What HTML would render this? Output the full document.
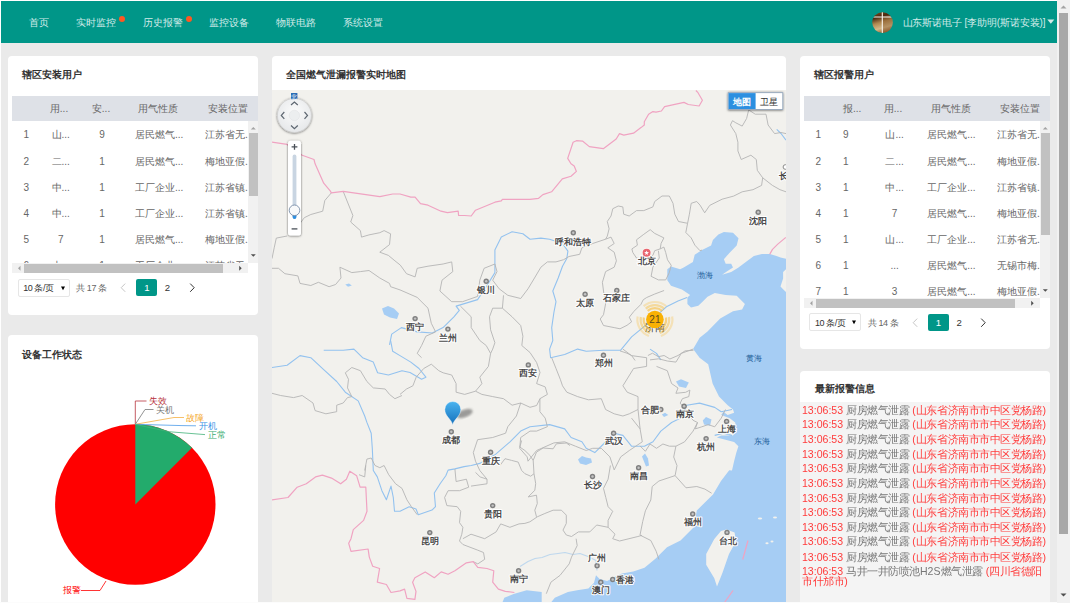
<!DOCTYPE html><html><head><meta charset="utf-8"><style>
*{margin:0;padding:0;box-sizing:border-box}
html,body{width:1070px;height:603px;overflow:hidden;background:#fff;font-family:"Liberation Sans",sans-serif}
#bg{position:absolute;left:1px;top:1px;width:1056px;height:601px;background:#eaeaea}
#hdr{position:absolute;left:1px;top:1px;width:1056px;height:42px;background:#009688}
.nav{position:absolute;top:16px;font-size:10px;line-height:12px;color:#d2ebe8;white-space:nowrap}
.dot{position:absolute;top:16px;width:6px;height:6px;border-radius:3px;background:#ff5722}
.panel{position:absolute;background:#fff;border-radius:4px;overflow:hidden}
.ttl{position:absolute;font-size:10px;line-height:12px;font-weight:bold;color:#333;white-space:nowrap}
.th{position:absolute;background:#dee1e7}
.t{position:absolute;font-size:10px;line-height:12px;color:#666;white-space:nowrap}
.c{transform:translateX(-50%)}
.clip{position:absolute;overflow:hidden}
#scroll{position:absolute;left:1057px;top:0;width:13px;height:603px;background:#f1f1f1}
</style></head><body><div id="bg"></div><div id="hdr"></div>
<div class="nav" style="left:29px;top:16.5px;">首页</div>
<div class="nav" style="left:76px;top:16.5px;">实时监控</div>
<div class="nav" style="left:143px;top:16.5px;">历史报警</div>
<div class="nav" style="left:209px;top:16.5px;">监控设备</div>
<div class="nav" style="left:276px;top:16.5px;">物联电路</div>
<div class="nav" style="left:343px;top:16.5px;">系统设置</div>
<div class="dot" style="left:119px"></div><div class="dot" style="left:186px"></div>
<div class="panel" style="left:8px;top:56px;width:250px;height:259px"></div>
<div class="ttl" style="left:22px;top:69px;">辖区安装用户</div>
<div class="th" style="left:12px;top:96px;width:246px;height:25px"></div>
<div class="t c" style="left:59px;top:102.5px;">用...</div>
<div class="t c" style="left:101px;top:102.5px;">安...</div>
<div class="t c" style="left:158px;top:102.5px;">用气性质</div>
<div class="t c" style="left:228px;top:102.5px;">安装位置</div>
<div class="clip" style="left:12px;top:121px;width:236px;height:142px">
<div class="t" style="left:11.5px;top:8.400000000000006px;">1</div>
<div class="t c" style="left:48.7px;top:8.400000000000006px;">山...</div>
<div class="t c" style="left:90px;top:8.400000000000006px;">9</div>
<div class="t" style="left:123px;top:8.400000000000006px;">居民燃气...</div>
<div class="t" style="left:193px;top:8.400000000000006px;">江苏省无...</div>
<div class="t" style="left:11.5px;top:34.599999999999994px;">2</div>
<div class="t c" style="left:48.7px;top:34.599999999999994px;">二...</div>
<div class="t c" style="left:90px;top:34.599999999999994px;">1</div>
<div class="t" style="left:123px;top:34.599999999999994px;">居民燃气...</div>
<div class="t" style="left:193px;top:34.599999999999994px;">梅地亚假...</div>
<div class="t" style="left:11.5px;top:60.80000000000001px;">3</div>
<div class="t c" style="left:48.7px;top:60.80000000000001px;">中...</div>
<div class="t c" style="left:90px;top:60.80000000000001px;">1</div>
<div class="t" style="left:123px;top:60.80000000000001px;">工厂企业...</div>
<div class="t" style="left:193px;top:60.80000000000001px;">江苏省镇...</div>
<div class="t" style="left:11.5px;top:87.0px;">4</div>
<div class="t c" style="left:48.7px;top:87.0px;">中...</div>
<div class="t c" style="left:90px;top:87.0px;">1</div>
<div class="t" style="left:123px;top:87.0px;">工厂企业...</div>
<div class="t" style="left:193px;top:87.0px;">江苏省镇...</div>
<div class="t" style="left:11.5px;top:113.19999999999999px;">5</div>
<div class="t c" style="left:48.7px;top:113.19999999999999px;">7</div>
<div class="t c" style="left:90px;top:113.19999999999999px;">1</div>
<div class="t" style="left:123px;top:113.19999999999999px;">居民燃气...</div>
<div class="t" style="left:193px;top:113.19999999999999px;">梅地亚假...</div>
<div class="t" style="left:11.5px;top:139.39999999999998px;">6</div>
<div class="t c" style="left:48.7px;top:139.39999999999998px;">山...</div>
<div class="t c" style="left:90px;top:139.39999999999998px;">1</div>
<div class="t" style="left:123px;top:139.39999999999998px;">工厂企业...</div>
<div class="t" style="left:193px;top:139.39999999999998px;">江苏省无...</div>
</div>
<div style="position:absolute;left:248px;top:121px;width:10px;height:142px;background:#f1f1f1"></div>
<div style="position:absolute;left:248.7px;top:133px;width:9.3px;height:63px;background:#c1c1c1"></div>
<svg style="position:absolute;left:248px;top:121px" width="10" height="142"><path d="M2.8 8.5 L5.3 6 L7.8 8.5Z" fill="#a3a3a3"/><path d="M2.8 133.2 L5.3 135.7 L7.8 133.2Z" fill="#505050"/></svg>
<div style="position:absolute;left:12px;top:263px;width:236px;height:10px;background:#f1f1f1"></div>
<div style="position:absolute;left:24px;top:263.7px;width:199px;height:9.3px;background:#c1c1c1"></div>
<svg style="position:absolute;left:12px;top:263px" width="236" height="10"><path d="M8.5 2.8 L6 5.3 L8.5 7.8Z" fill="#a3a3a3"/><path d="M227.2 2.8 L229.7 5.3 L227.2 7.8Z" fill="#505050"/></svg>
<div style="position:absolute;left:17.6px;top:278.5px;width:52px;height:18px;border:1px solid #e6e6e6;border-radius:2px;background:#fff"></div>
<div class="t" style="left:23.200000000000003px;top:282.0px;color:#333;font-size:9px;letter-spacing:-0.4px">10 条/页</div>
<svg style="position:absolute;left:60.6px;top:285.5px" width="5" height="5"><path d="M0 0.5 L4 0.5 L2 4.2Z" fill="#000"/></svg>
<div class="t" style="left:76.1px;top:282.0px;font-size:9px;letter-spacing:-0.4px">共 17 条</div>
<svg style="position:absolute;left:120.1px;top:283.0px" width="7" height="10"><path d="M5.2 0.6 L1.2 4.7 L5.2 8.8" fill="none" stroke="#c6c6c6" stroke-width="1"/></svg>
<div style="position:absolute;left:136.1px;top:278.7px;width:21px;height:17.8px;border-radius:2px;background:#009688"></div>
<div class="t c" style="left:146.79999999999998px;top:281.8px;color:#fff;font-size:9.6px">1</div>
<div class="t c" style="left:167.4px;top:281.8px;color:#333;font-size:9.6px">2</div>
<svg style="position:absolute;left:188.6px;top:283.0px" width="7" height="10"><path d="M1.2 0.6 L5.2 4.7 L1.2 8.8" fill="none" stroke="#333" stroke-width="1"/></svg>
<div class="panel" style="left:272px;top:56px;width:514px;height:560px"></div>
<div class="ttl" style="left:286px;top:69px;">全国燃气泄漏报警实时地图</div>
<svg style="position:absolute;left:272px;top:89.5px" width="514" height="514" viewBox="272 89.5 514 514"><rect x="272" y="89.5" width="514" height="514" fill="#f2f1ed"/><polygon points="786.0,258.2 780.5,256.9 776.5,255.5 769.8,253.6 761.9,253.6 753.9,255.5 745.8,261.5 738.5,267.0 731.2,271.5 722.1,274.3 727.5,270.6 733.0,267.0 731.2,263.3 725.7,263.3 723.9,258.8 729.4,252.4 736.7,245.1 738.5,237.8 733.0,232.3 723.9,231.4 718.4,234.1 712.9,239.6 711.1,245.1 702.0,249.6 694.7,254.2 692.9,261.5 683.7,267.0 680.1,268.8 671.0,266.1 667.3,268.8 667.3,279.8 671.0,285.2 681.9,288.9 690.1,294.4 687.4,297.1 687.4,303.5 691.0,307.1 698.3,305.3 702.0,301.7 707.5,296.2 714.8,292.5 725.7,294.4 736.7,295.3 744.9,303.5 742.1,309.0 733.0,310.8 720.2,318.1 714.8,323.6 707.5,330.9 699.7,337.3 693.1,348.6 699.6,357.3 708.2,363.7 712.6,383.1 719.0,396.1 727.7,404.7 733.0,409.0 734.1,412.3 727.7,414.4 723.3,411.2 721.2,414.4 729.8,417.7 735.2,422.0 736.3,430.6 733.0,434.9 721.2,434.9 716.9,437.1 725.5,439.2 734.1,441.4 738.4,445.7 736.3,452.2 734.1,460.8 732.0,470.0 729.2,469.7 721.0,480.5 713.0,494.0 704.9,502.0 696.8,510.0 694.0,526.5 680.5,540.0 667.0,546.7 655.7,558.0 644.5,567.3 633.3,571.0 622.0,573.0 614.6,576.6 607.1,580.4 599.6,578.5 596.0,574.8 594.0,582.2 588.4,587.9 577.2,589.7 567.9,591.6 554.8,597.2 551.0,602.0 551.0,604.0 786.0,604.0 786.0,291.4 783.1,288.7 780.5,286.1 783.1,278.1 783.1,271.5 786.0,268.8" fill="#a6cdf4"/><polygon points="502.4,604.0 502.4,602.0 504.3,597.2 513.6,593.5 526.7,589.7 541.7,591.6 541.7,604.0" fill="#a6cdf4"/><polygon points="726.5,529.0 734.6,532.0 736.0,541.0 729.0,553.5 722.4,572.4 717.0,586.0 714.3,577.8 706.2,564.3 706.2,553.5 714.3,538.6 721.0,530.5" fill="#f2f1ed"/><ellipse cx="760" cy="518" rx="2.2" ry="1" fill="#f2f1ed"/><ellipse cx="775" cy="517" rx="2" ry="1" fill="#f2f1ed"/><ellipse cx="767" cy="542.7" rx="1.6" ry="1" fill="#f2f1ed"/><ellipse cx="772" cy="541" rx="1.5" ry="1" fill="#f2f1ed"/><polygon points="382.0,308.0 388.0,305.6 394.0,308.0 399.0,313.0 397.0,318.5 390.0,317.0 384.0,314.0" fill="#a6cdf4"/><polygon points="345.3,284.0 349.0,282.9 351.8,285.0 348.0,286.2" fill="#a6cdf4"/><polygon points="702.8,420.0 706.0,416.6 711.5,419.0 710.0,425.2 704.0,424.0" fill="#a6cdf4"/><polygon points="676.0,381.0 681.0,378.8 688.8,382.0 686.0,387.5 679.0,386.0" fill="#a6cdf4"/><polygon points="661.9,414.0 665.0,412.3 668.3,414.5 664.0,416.6" fill="#a6cdf4"/><polygon points="578.0,459.0 582.0,455.5 586.0,457.0 591.0,458.0 592.0,462.0 586.0,464.5 580.0,463.0" fill="#a6cdf4"/><polygon points="642.0,456.0 645.0,453.0 648.0,458.0 649.0,465.0 646.0,466.0 644.0,461.0" fill="#a6cdf4"/><polyline points="389.5,344.4 391.7,333.6 401.4,327.1 417.2,331.4 432.3,332.5 443.1,327.1 453.9,316.3 459.3,309.9 456.1,305.6 477.6,299.1 486.2,286.2 494.9,272.1 494.9,249.5 501.3,236.6 512.1,231.2 522.9,233.3 530.0,238.7 540.9,237.6 549.6,238.7 562.5,243.0 567.9,250.6 566.8,258.1 562.5,265.7 558.2,277.5 552.8,290.5 556.0,301.2 553.9,312.0 551.7,327.1 552.8,340.0 549.6,348.6 550.6,357.2 564.7,354.0 577.6,348.6 586.2,350.8 603.5,349.7 620.7,349.7 631.6,336.4 645.5,324.8 666.4,306.3 678.0,300.4 687.0,297.0" fill="none" stroke="#93c2ef" stroke-opacity="1" stroke-width="1.1" stroke-linejoin="round"/><polyline points="323.7,349.7 343.2,349.7 353.9,348.6 362.6,357.2 373.3,361.6 377.6,372.3 388.4,374.5 402.0,370.2 410.0,372.0 421.6,378.8 425.9,376.7 419.0,368.0 410.8,361.6 400.0,355.1 392.7,350.8 390.6,340.0" fill="none" stroke="#93c2ef" stroke-opacity="1" stroke-width="1.1" stroke-linejoin="round"/><polyline points="272.0,367.0 287.1,364.8 300.0,355.1 310.8,357.2 323.7,369.1 336.7,381.0 345.3,391.7 358.2,400.4 364.7,415.5 366.9,421.9 371.2,432.7 372.3,447.8 373.3,470.0 377.3,476.4 381.9,490.2 386.4,499.3 391.0,485.6 393.3,497.0 394.5,510.8 400.0,510.8 409.2,506.2 416.0,508.5 418.3,514.2 432.0,509.6 435.5,506.2 434.3,492.5 440.1,483.3 445.8,475.3 448.1,469.6 454.9,468.4 464.1,466.1 471.2,465.0 479.8,462.9 494.9,454.3 510.0,441.3 520.7,430.6 530.0,426.2 549.6,424.1 564.7,428.4 571.1,437.0 581.9,441.3 586.2,447.8 594.8,452.1 603.5,443.5 614.2,432.7 622.9,434.9 631.5,445.7 644.4,445.7 653.0,441.3 660.8,430.6 671.6,422.0 680.2,417.7 686.7,404.7 699.6,402.6 714.7,406.9 721.2,411.2 732.0,409.0" fill="none" stroke="#93c2ef" stroke-opacity="1" stroke-width="1.1" stroke-linejoin="round"/><polyline points="776.7,128.8 781.0,133.0 786.0,139.6" fill="none" stroke="#93c2ef" stroke-opacity="1" stroke-width="1.1" stroke-linejoin="round"/><polyline points="650.0,348.6 656.5,352.9 660.8,359.4" fill="none" stroke="#93c2ef" stroke-opacity="1" stroke-width="1.1" stroke-linejoin="round"/><polyline points="714.7,434.9 723.3,432.7 732.0,434.9" fill="none" stroke="#93c2ef" stroke-opacity="1" stroke-width="1.1" stroke-linejoin="round"/><polyline points="520.0,566.0 528.0,561.0 535.0,558.0 542.0,557.0 550.0,554.0 558.0,553.0 565.0,552.0 573.0,554.0 580.0,553.0 588.0,556.0 596.0,560.0 597.0,570.0" fill="none" stroke="#93c2ef" stroke-opacity="0.55" stroke-width="1.1" stroke-linejoin="round"/><polyline points="521.6,440.0 519.9,446.6 524.9,450.0 529.9,454.9 533.2,459.9 536.5,451.6 543.1,447.5 553.1,448.3 556.4,443.3 566.3,442.5 570.0,445.0" fill="none" stroke="#b4b4b4" stroke-width="0.9" stroke-linejoin="round"/><polyline points="533.2,459.9 534.0,473.2 535.7,483.1 534.8,489.8 528.2,496.4 536.5,494.7 537.3,503.0 534.8,509.7 536.5,516.3" fill="none" stroke="#b4b4b4" stroke-width="0.9" stroke-linejoin="round"/><polyline points="500.0,464.9 505.0,458.2 511.6,459.9 518.2,461.6 521.6,469.9 524.9,473.2 530.7,475.7 534.0,473.2" fill="none" stroke="#b4b4b4" stroke-width="0.9" stroke-linejoin="round"/><polyline points="287.1,235.5 276.3,237.6 274.2,247.3 272.0,258.1" fill="none" stroke="#b4b4b4" stroke-width="0.9" stroke-linejoin="round"/><polyline points="272.0,267.8 278.5,267.8 284.9,273.2 297.9,275.4 300.0,282.9 310.8,285.0 318.4,281.8 329.1,286.2 335.6,284.0 341.0,277.5 339.9,266.7 351.8,272.1 360.4,271.1 369.0,270.0 379.8,277.5 389.5,282.9 390.6,286.2 400.0,289.4 417.2,296.9 428.0,307.7 431.3,322.8 435.6,331.4 425.9,335.7 421.6,345.0 417.2,352.9 421.6,357.2" fill="none" stroke="#b4b4b4" stroke-width="0.9" stroke-linejoin="round"/><polyline points="331.3,192.4 324.8,200.0 322.7,210.7 310.8,214.0 304.3,217.2 300.0,223.0" fill="none" stroke="#b4b4b4" stroke-width="0.9" stroke-linejoin="round"/><polyline points="343.2,190.9 352.9,215.0 350.7,221.5 360.4,230.1 361.5,236.6 369.0,234.4 379.8,232.2 384.1,230.1 390.6,233.3 389.5,244.1 379.8,251.7 388.4,254.9 394.9,260.3 400.3,264.6 406.5,273.2 415.1,276.4 417.2,267.8 428.0,265.7 443.1,263.5 451.7,261.4 452.8,271.1 442.0,279.7 439.9,290.5 451.7,301.2 462.5,301.2 477.6,295.9 479.8,279.7 484.1,267.8 494.9,263.5 497.0,271.1 492.7,279.7 499.2,288.3 507.8,294.8 520.7,298.0 528.0,288.3 534.5,277.5 540.9,266.7 547.4,261.4 556.0,261.4 563.6,259.2 569.0,256.0 579.7,253.8 581.9,247.3 592.7,243.0 605.6,238.7 611.0,236.6 614.2,243.0 607.8,247.3 614.2,251.7 616.4,260.3 614.2,266.7 605.6,271.1 602.4,281.8 603.5,290.5 605.6,303.4 603.5,314.2 600.2,318.5 603.5,325.0 614.2,327.1 620.0,328.3 627.0,324.8 631.6,321.3 629.3,316.7 633.9,310.9 640.9,303.9 643.2,299.3 646.7,297.0 654.8,293.5 664.1,290.0" fill="none" stroke="#b4b4b4" stroke-width="0.9" stroke-linejoin="round"/><polyline points="605.6,238.7 607.3,235.6 609.1,228.3 607.3,221.0 611.0,215.5 612.8,208.2 618.2,205.5 622.8,206.4 623.7,213.7 629.2,215.5 636.5,210.1 643.8,210.1 652.9,206.4 654.7,201.0 662.0,195.5 669.3,195.5 673.0,202.8 674.8,213.7 678.5,221.0 687.6,222.8 689.4,213.7 691.2,202.8 696.7,201.0 700.0,204.6 704.7,212.3 709.7,204.9 722.1,198.7 733.6,195.6 742.2,191.3 753.0,189.2 761.6,184.9 762.7,177.3 757.3,169.8 756.3,159.0 750.9,154.7 741.2,159.0 737.9,150.4 737.9,141.7 735.8,133.1 730.4,124.5 732.5,120.2 735.8,122.3 742.2,125.6 746.6,118.0 748.7,109.4" fill="none" stroke="#b4b4b4" stroke-width="0.9" stroke-linejoin="round"/><polyline points="748.7,109.4 755.2,113.7 766.0,113.7 768.1,124.5 774.6,133.1 781.0,132.0 786.0,133.1" fill="none" stroke="#b4b4b4" stroke-width="0.9" stroke-linejoin="round"/><polyline points="762.7,177.3 772.4,184.9 780.0,189.2 786.0,191.3" fill="none" stroke="#b4b4b4" stroke-width="0.9" stroke-linejoin="round"/><polyline points="687.6,222.8 685.8,232.0 691.2,237.4 694.9,244.7 700.0,250.2 702.0,249.6" fill="none" stroke="#b4b4b4" stroke-width="0.9" stroke-linejoin="round"/><polyline points="636.5,239.3 643.8,233.8 650.2,229.2 654.7,232.9 663.9,237.4 661.1,242.9 660.2,248.4 654.7,250.2 652.9,254.8 649.3,257.5 642.0,259.3 636.5,257.5 632.8,252.0 631.9,248.4 637.4,244.7 636.5,239.3" fill="none" stroke="#b4b4b4" stroke-width="0.9" stroke-linejoin="round"/><polyline points="660.2,248.4 663.9,246.6 665.7,252.0 667.5,259.3 671.2,264.8 669.3,272.1 665.7,279.4 658.4,279.4 651.1,275.8 652.9,266.6 659.3,257.5 658.4,250.2" fill="none" stroke="#b4b4b4" stroke-width="0.9" stroke-linejoin="round"/><polyline points="620.0,350.4 627.0,352.7 631.6,355.0 635.1,360.0" fill="none" stroke="#b4b4b4" stroke-width="0.9" stroke-linejoin="round"/><polyline points="647.9,355.0 652.5,352.7 658.3,356.2 664.1,355.0 669.9,358.5 678.0,355.0 685.0,350.4 693.5,349.8" fill="none" stroke="#b4b4b4" stroke-width="0.9" stroke-linejoin="round"/><polyline points="622.9,348.6 631.5,355.1 646.6,357.2 646.6,365.9 633.6,368.0 622.9,385.3 627.2,391.7 638.0,396.1 638.0,409.0 629.3,413.3 622.9,415.5 614.2,413.3 605.6,409.0 601.3,398.2 588.4,399.3 577.6,396.1 566.8,391.7 562.5,385.3 560.3,378.8 556.0,368.0 551.7,357.2" fill="none" stroke="#b4b4b4" stroke-width="0.9" stroke-linejoin="round"/><polyline points="656.5,365.9 667.3,370.2 671.6,383.1 678.0,387.5 675.9,392.8 685.6,391.8 689.9,389.6 688.8,396.1 682.4,398.2 680.2,402.6 686.0,410.0 693.1,419.8 697.5,422.0 695.3,428.4 701.8,426.3 708.2,424.1 714.7,426.3 721.2,417.7 725.5,409.0" fill="none" stroke="#b4b4b4" stroke-width="0.9" stroke-linejoin="round"/><polyline points="650.0,359.4 658.6,358.3 667.3,360.5 675.9,361.6 681.3,352.9 693.1,348.6" fill="none" stroke="#b4b4b4" stroke-width="0.9" stroke-linejoin="round"/><polyline points="697.5,422.0 693.1,430.6 684.5,441.4 675.9,445.7 669.4,445.7 662.9,443.5 656.5,447.8 650.0,443.5 645.4,450.8 640.0,445.4" fill="none" stroke="#b4b4b4" stroke-width="0.9" stroke-linejoin="round"/><polyline points="675.9,445.7 673.7,456.5 677.0,465.1 675.1,475.1 686.0,487.3 696.8,486.0 704.9,488.6 711.6,492.7" fill="none" stroke="#b4b4b4" stroke-width="0.9" stroke-linejoin="round"/><polyline points="675.1,475.1 658.9,480.5 652.2,486.0 650.8,499.5 645.4,510.3 642.7,521.1 640.0,534.6 650.8,540.0 656.2,550.8 658.9,558.9" fill="none" stroke="#b4b4b4" stroke-width="0.9" stroke-linejoin="round"/><polyline points="638.0,409.0 640.1,428.4 642.3,441.3 629.3,450.0 620.7,456.4 614.2,469.4" fill="none" stroke="#b4b4b4" stroke-width="0.9" stroke-linejoin="round"/><polyline points="631.5,417.6 640.1,428.4" fill="none" stroke="#b4b4b4" stroke-width="0.9" stroke-linejoin="round"/><polyline points="536.6,383.1 545.2,386.4 547.4,393.9 539.9,398.2 539.9,411.2 545.2,417.6 547.4,426.2 536.6,430.6 530.0,430.6 520.7,437.0 519.7,447.8 527.2,456.4 528.0,460.7 536.6,450.0 553.9,442.4 564.7,441.3 575.4,445.7 586.2,450.0 592.7,447.8 601.3,447.8 609.9,456.4 614.2,469.4" fill="none" stroke="#b4b4b4" stroke-width="0.9" stroke-linejoin="round"/><polyline points="400.0,393.9 406.5,388.5 412.9,385.3 416.2,376.7 423.7,368.0 431.3,363.7 438.8,370.2 443.1,372.3 451.7,374.5 456.1,383.1 456.1,391.7 464.7,393.9 475.5,390.7 481.9,393.9 492.7,396.1 503.5,398.2 512.1,404.7 520.7,402.5 530.0,406.8 536.6,405.0 540.0,398.2" fill="none" stroke="#b4b4b4" stroke-width="0.9" stroke-linejoin="round"/><polyline points="475.5,390.7 481.9,383.1 479.8,376.7 488.4,365.9 490.6,352.9 492.7,348.6 494.9,342.2 490.6,329.3 489.5,316.3 492.7,307.7 502.4,307.7 512.1,316.3 520.7,325.0 522.9,335.7 521.8,345.0 530.0,352.0 536.6,362.0 540.0,372.0 536.6,383.1" fill="none" stroke="#b4b4b4" stroke-width="0.9" stroke-linejoin="round"/><polyline points="460.4,305.6 471.2,316.3 471.2,327.1 479.8,340.0 486.2,345.0 490.6,352.9" fill="none" stroke="#b4b4b4" stroke-width="0.9" stroke-linejoin="round"/><polyline points="503.5,294.8 502.4,307.7" fill="none" stroke="#b4b4b4" stroke-width="0.9" stroke-linejoin="round"/><polyline points="520.7,402.5 516.4,415.5 507.8,426.2 505.6,432.7 492.7,437.0 477.6,439.2 473.3,452.1 475.5,460.7 479.8,470.0 487.0,478.7 487.0,483.3 471.0,485.6" fill="none" stroke="#b4b4b4" stroke-width="0.9" stroke-linejoin="round"/><polyline points="272.0,392.8 280.6,395.0 293.6,397.1 302.2,395.0 313.0,402.5 315.1,410.1 325.9,413.3 336.7,411.2 336.7,404.7 343.2,402.5 347.5,397.1 351.8,396.1 347.5,387.4 348.5,378.8 345.3,372.3 351.8,367.0 360.4,370.2 366.9,381.0 373.3,387.4 385.2,388.5 389.5,393.9 394.9,398.2 402.0,395.0" fill="none" stroke="#b4b4b4" stroke-width="0.9" stroke-linejoin="round"/><polyline points="364.7,470.0 366.9,458.6 371.2,457.5 375.0,465.0 379.8,467.2 384.1,465.0 388.7,474.2 395.6,483.3 402.0,487.9 406.9,499.3 411.4,506.2 417.2,514.2" fill="none" stroke="#b4b4b4" stroke-width="0.9" stroke-linejoin="round"/><polyline points="365.8,465.0 364.7,476.4 359.0,474.2" fill="none" stroke="#b4b4b4" stroke-width="0.9" stroke-linejoin="round"/><polyline points="454.9,468.4 456.1,481.0 466.4,478.7 468.7,486.7 459.5,490.2 448.1,490.2 444.6,497.0 446.9,505.1 457.2,506.2 460.7,510.8 459.5,522.2 462.9,526.8 461.8,533.7 459.5,540.5 462.9,544.0 477.8,549.7 483.5,552.0 484.7,558.8 477.8,563.4 473.2,561.1" fill="none" stroke="#b4b4b4" stroke-width="0.9" stroke-linejoin="round"/><polyline points="462.9,538.2 471.0,533.7 484.7,538.2 496.1,531.4 500.7,523.4 509.9,526.8 519.0,523.4 524.9,522.9 529.9,521.3 537.3,516.3 544.8,513.0 553.1,509.7 561.4,509.7 566.3,514.6 566.3,522.9 563.0,529.6 566.3,534.5 571.5,536.0 578.4,531.4 589.8,531.4 596.7,524.5 608.1,526.8 615.0,533.7 612.7,538.2 619.6,540.5 637.9,536.0 642.0,534.8" fill="none" stroke="#b4b4b4" stroke-width="0.9" stroke-linejoin="round"/><polyline points="610.4,465.0 608.1,478.7 603.5,487.9 605.8,497.0 608.1,506.2 612.7,510.8 608.1,519.9 608.1,526.8" fill="none" stroke="#b4b4b4" stroke-width="0.9" stroke-linejoin="round"/><polyline points="576.1,538.2 577.2,545.1 571.5,556.6 569.2,563.4 560.0,574.9 550.9,581.7 546.3,593.2" fill="none" stroke="#b4b4b4" stroke-width="0.9" stroke-linejoin="round"/><polyline points="475.5,471.9 480.1,476.4 487.0,478.7" fill="none" stroke="#b4b4b4" stroke-width="0.9" stroke-linejoin="round"/><polyline points="272.0,141.7 287.1,143.9 302.2,154.7 314.0,159.0 315.1,163.3 323.7,182.7 330.2,190.3 331.3,192.4 343.2,190.9 379.8,196.1 392.7,193.5 400.0,193.5 410.8,196.7 415.1,196.7 420.5,203.2 428.0,204.7 441.0,210.7 447.4,212.2 458.2,210.7 458.6,215.0 464.7,215.0 471.2,215.5 475.5,209.7 494.9,201.7 501.3,200.4 502.4,198.9 530.0,198.9 538.6,197.8 542.9,194.1 551.6,191.3 562.3,178.4 571.0,175.8 576.4,170.9 574.2,165.5 571.0,163.3 567.7,157.9 573.1,141.7 576.4,140.2 582.8,140.7 589.3,146.1 603.3,148.2 616.2,138.5 619.5,133.1 623.8,134.6 633.5,132.7 641.0,127.1 644.3,124.5 644.3,121.3 648.6,113.7 652.9,111.1 656.0,111.6 661.4,110.5 664.6,106.2 684.0,101.9 688.3,104.0 699.1,105.5 702.4,99.7 698.0,92.2 695.9,90.0" fill="none" stroke="#f0a3c2" stroke-width="1.2" stroke-linejoin="round"/><polyline points="272.0,499.3 288.0,497.0 297.2,486.7 306.3,483.3 315.5,476.4 322.4,474.6 331.5,477.6 340.7,483.3 346.4,478.7 349.8,470.7 356.7,475.3 360.1,486.7 365.8,486.7 367.0,510.8 363.6,519.9 353.3,529.1 351.0,538.2 348.7,542.8 351.0,550.8 368.1,548.5 369.3,556.6 372.7,565.7 379.6,568.0 377.3,581.7 386.4,584.0 391.0,592.0 400.0,590.4 404.6,588.6 406.9,597.8 414.9,598.9 416.0,590.9 412.6,581.7 414.9,577.2 425.2,571.4 434.3,577.2 441.2,571.4 448.1,573.7 454.9,570.3 466.4,562.3 473.2,561.1 477.8,566.9 487.0,568.0 493.8,570.3 492.7,581.7 498.4,588.6 505.3,590.9 514.4,592.0" fill="none" stroke="#f0a3c2" stroke-width="1.2" stroke-linejoin="round"/><polyline points="769.8,253.6 772.5,248.9 777.8,243.6 785.8,237.0" fill="none" stroke="#f0a3c2" stroke-width="1.2" stroke-linejoin="round"/><polyline points="748.0,540.0 742.7,559.0" fill="none" stroke="#f0a3c2" stroke-width="1.2" stroke-linejoin="round"/><polyline points="733.0,590.0 723.8,603.0" fill="none" stroke="#f0a3c2" stroke-width="1.2" stroke-linejoin="round"/><text x="705" y="277.5" font-size="7.5" fill="#1d5f9a" text-anchor="middle">渤海</text><text x="754" y="360.5" font-size="7.5" fill="#1d5f9a" text-anchor="middle">黄海</text><text x="762" y="443.5" font-size="7.5" fill="#1d5f9a" text-anchor="middle">东海</text><circle cx="486.2" cy="280.8" r="2.7" fill="#808080"/><circle cx="486.2" cy="280.8" r="1.2" fill="#c4c4c4"/><text x="486.2" y="292.29999999999995" font-size="9" font-weight="bold" fill="#4a4a4a" text-anchor="middle" stroke="#fff" stroke-width="2" paint-order="stroke" stroke-linejoin="round">银川</text><circle cx="415.1" cy="318.1" r="2.7" fill="#808080"/><circle cx="415.1" cy="318.1" r="1.2" fill="#c4c4c4"/><text x="415.1" y="329.4" font-size="9" font-weight="bold" fill="#4a4a4a" text-anchor="middle" stroke="#fff" stroke-width="2" paint-order="stroke" stroke-linejoin="round">西宁</text><circle cx="447.9" cy="328.6" r="2.7" fill="#808080"/><circle cx="447.9" cy="328.6" r="1.2" fill="#c4c4c4"/><text x="447.9" y="340.79999999999995" font-size="9" font-weight="bold" fill="#4a4a4a" text-anchor="middle" stroke="#fff" stroke-width="2" paint-order="stroke" stroke-linejoin="round">兰州</text><circle cx="573.3" cy="232.2" r="2.7" fill="#808080"/><circle cx="573.3" cy="232.2" r="1.2" fill="#c4c4c4"/><text x="573.3" y="244.20000000000002" font-size="9" font-weight="bold" fill="#4a4a4a" text-anchor="middle" stroke="#fff" stroke-width="2" paint-order="stroke" stroke-linejoin="round">呼和浩特</text><circle cx="585.1" cy="293.7" r="2.7" fill="#808080"/><circle cx="585.1" cy="293.7" r="1.2" fill="#c4c4c4"/><text x="585.1" y="305.2" font-size="9" font-weight="bold" fill="#4a4a4a" text-anchor="middle" stroke="#fff" stroke-width="2" paint-order="stroke" stroke-linejoin="round">太原</text><circle cx="616.8" cy="290" r="2.7" fill="#808080"/><circle cx="616.8" cy="290" r="1.2" fill="#c4c4c4"/><text x="616.8" y="300.9" font-size="9" font-weight="bold" fill="#4a4a4a" text-anchor="middle" stroke="#fff" stroke-width="2" paint-order="stroke" stroke-linejoin="round">石家庄</text><circle cx="758.2" cy="211.8" r="2.7" fill="#808080"/><circle cx="758.2" cy="211.8" r="1.2" fill="#c4c4c4"/><text x="758.2" y="223.20000000000002" font-size="9" font-weight="bold" fill="#4a4a4a" text-anchor="middle" stroke="#fff" stroke-width="2" paint-order="stroke" stroke-linejoin="round">沈阳</text><circle cx="603.5" cy="354.7" r="2.7" fill="#808080"/><circle cx="603.5" cy="354.7" r="1.2" fill="#c4c4c4"/><text x="603.5" y="365.7" font-size="9" font-weight="bold" fill="#4a4a4a" text-anchor="middle" stroke="#fff" stroke-width="2" paint-order="stroke" stroke-linejoin="round">郑州</text><circle cx="528.3" cy="364.4" r="2.7" fill="#808080"/><circle cx="528.3" cy="364.4" r="1.2" fill="#c4c4c4"/><text x="528.3" y="375.5" font-size="9" font-weight="bold" fill="#4a4a4a" text-anchor="middle" stroke="#fff" stroke-width="2" paint-order="stroke" stroke-linejoin="round">西安</text><circle cx="660.8" cy="409" r="2.7" fill="#808080"/><circle cx="660.8" cy="409" r="1.2" fill="#c4c4c4"/><text x="649.5" y="412.09999999999997" font-size="9" font-weight="bold" fill="#4a4a4a" text-anchor="middle" stroke="#fff" stroke-width="2" paint-order="stroke" stroke-linejoin="round">合肥</text><circle cx="684.1" cy="405.8" r="2.7" fill="#808080"/><circle cx="684.1" cy="405.8" r="1.2" fill="#c4c4c4"/><text x="684.5" y="416.7" font-size="9" font-weight="bold" fill="#4a4a4a" text-anchor="middle" stroke="#fff" stroke-width="2" paint-order="stroke" stroke-linejoin="round">南京</text><circle cx="726.6" cy="420.9" r="2.7" fill="#808080"/><circle cx="726.6" cy="420.9" r="1.2" fill="#c4c4c4"/><text x="726.6" y="431.9" font-size="9" font-weight="bold" fill="#4a4a4a" text-anchor="middle" stroke="#fff" stroke-width="2" paint-order="stroke" stroke-linejoin="round">上海</text><circle cx="706.1" cy="438.1" r="2.7" fill="#808080"/><circle cx="706.1" cy="438.1" r="1.2" fill="#c4c4c4"/><text x="706.1" y="449.2" font-size="9" font-weight="bold" fill="#4a4a4a" text-anchor="middle" stroke="#fff" stroke-width="2" paint-order="stroke" stroke-linejoin="round">杭州</text><circle cx="613.6" cy="432.7" r="2.7" fill="#808080"/><circle cx="613.6" cy="432.7" r="1.2" fill="#c4c4c4"/><text x="613.6" y="443.9" font-size="9" font-weight="bold" fill="#4a4a4a" text-anchor="middle" stroke="#fff" stroke-width="2" paint-order="stroke" stroke-linejoin="round">武汉</text><circle cx="451.3" cy="431.2" r="2.7" fill="#808080"/><circle cx="451.3" cy="431.2" r="1.2" fill="#c4c4c4"/><text x="451.3" y="442.7" font-size="9" font-weight="bold" fill="#4a4a4a" text-anchor="middle" stroke="#fff" stroke-width="2" paint-order="stroke" stroke-linejoin="round">成都</text><circle cx="490.6" cy="451.7" r="2.7" fill="#808080"/><circle cx="490.6" cy="451.7" r="1.2" fill="#c4c4c4"/><text x="490.6" y="463.59999999999997" font-size="9" font-weight="bold" fill="#4a4a4a" text-anchor="middle" stroke="#fff" stroke-width="2" paint-order="stroke" stroke-linejoin="round">重庆</text><circle cx="592.5" cy="476" r="2.7" fill="#808080"/><circle cx="592.5" cy="476" r="1.2" fill="#c4c4c4"/><text x="592.5" y="487.4" font-size="9" font-weight="bold" fill="#4a4a4a" text-anchor="middle" stroke="#fff" stroke-width="2" paint-order="stroke" stroke-linejoin="round">长沙</text><circle cx="638.6" cy="467.3" r="2.7" fill="#808080"/><circle cx="638.6" cy="467.3" r="1.2" fill="#c4c4c4"/><text x="638.6" y="478.9" font-size="9" font-weight="bold" fill="#4a4a4a" text-anchor="middle" stroke="#fff" stroke-width="2" paint-order="stroke" stroke-linejoin="round">南昌</text><circle cx="492.7" cy="505.1" r="2.7" fill="#808080"/><circle cx="492.7" cy="505.1" r="1.2" fill="#c4c4c4"/><text x="492.7" y="516.4" font-size="9" font-weight="bold" fill="#4a4a4a" text-anchor="middle" stroke="#fff" stroke-width="2" paint-order="stroke" stroke-linejoin="round">贵阳</text><circle cx="692.7" cy="513.5" r="2.7" fill="#808080"/><circle cx="692.7" cy="513.5" r="1.2" fill="#c4c4c4"/><text x="692.7" y="524.5" font-size="9" font-weight="bold" fill="#4a4a4a" text-anchor="middle" stroke="#fff" stroke-width="2" paint-order="stroke" stroke-linejoin="round">福州</text><circle cx="727" cy="531.9" r="2.7" fill="#808080"/><circle cx="727" cy="531.9" r="1.2" fill="#c4c4c4"/><text x="727.8" y="543.6999999999999" font-size="9" font-weight="bold" fill="#4a4a4a" text-anchor="middle" stroke="#fff" stroke-width="2" paint-order="stroke" stroke-linejoin="round">台北</text><circle cx="429.8" cy="532.1" r="2.7" fill="#808080"/><circle cx="429.8" cy="532.1" r="1.2" fill="#c4c4c4"/><text x="429.8" y="543.4" font-size="9" font-weight="bold" fill="#4a4a4a" text-anchor="middle" stroke="#fff" stroke-width="2" paint-order="stroke" stroke-linejoin="round">昆明</text><circle cx="597.1" cy="565.3" r="2.7" fill="#808080"/><circle cx="597.1" cy="565.3" r="1.2" fill="#c4c4c4"/><text x="597.1" y="560.1" font-size="9" font-weight="bold" fill="#4a4a4a" text-anchor="middle" stroke="#fff" stroke-width="2" paint-order="stroke" stroke-linejoin="round">广州</text><circle cx="518.6" cy="570.3" r="2.7" fill="#808080"/><circle cx="518.6" cy="570.3" r="1.2" fill="#c4c4c4"/><text x="518.6" y="581.6999999999999" font-size="9" font-weight="bold" fill="#4a4a4a" text-anchor="middle" stroke="#fff" stroke-width="2" paint-order="stroke" stroke-linejoin="round">南宁</text><circle cx="612.7" cy="579" r="2.7" fill="#808080"/><circle cx="612.7" cy="579" r="1.2" fill="#c4c4c4"/><text x="625.3" y="582.5" font-size="9" font-weight="bold" fill="#4a4a4a" text-anchor="middle" stroke="#fff" stroke-width="2" paint-order="stroke" stroke-linejoin="round">香港</text><circle cx="600.8" cy="581.7" r="2.7" fill="#808080"/><circle cx="600.8" cy="581.7" r="1.2" fill="#c4c4c4"/><text x="600.8" y="592.6999999999999" font-size="9" font-weight="bold" fill="#4a4a4a" text-anchor="middle" stroke="#fff" stroke-width="2" paint-order="stroke" stroke-linejoin="round">澳门</text><circle cx="785.4" cy="166.5" r="2.3" fill="#fff" stroke="#8a8a8a" stroke-width="1"/><text x="778.5" y="178.3" font-size="9" font-weight="bold" fill="#4a4a4a" stroke="#fff" stroke-width="2" paint-order="stroke">长春</text><text x="646.6" y="263.8" font-size="9" font-weight="bold" fill="#4a4a4a" text-anchor="middle" stroke="#fff" stroke-width="2" paint-order="stroke">北京</text><circle cx="646.6" cy="252.3" r="4.6" fill="#fff"/><circle cx="646.6" cy="252.3" r="4" fill="#e8676f"/><polygon points="646.6,249.9 647.2,251.6 649.1,251.7 647.6,252.8 648.1,254.6 646.6,253.6 645.1,254.6 645.6,252.8 644.1,251.7 646.0,251.6" fill="#fff"/><text x="655" y="330.5" font-size="9.5" font-weight="500" fill="#333" text-anchor="middle">济南</text><path d="M643.65 305.59 A17.5 17.5 0 0 1 666.15 305.59" fill="none" stroke="#f7bd3a" stroke-opacity="0.3" stroke-width="2.2"/><path d="M648.91 335.44 A17.5 17.5 0 0 1 637.67 315.96" fill="none" stroke="#f7bd3a" stroke-opacity="0.3" stroke-width="2.2"/><path d="M672.13 315.96 A17.5 17.5 0 0 1 660.89 335.44" fill="none" stroke="#f7bd3a" stroke-opacity="0.3" stroke-width="2.2"/><path d="M645.71 308.05 A14.3 14.3 0 0 1 664.09 308.05" fill="none" stroke="#f7bd3a" stroke-opacity="0.45" stroke-width="2.2"/><path d="M650.01 332.44 A14.3 14.3 0 0 1 640.82 316.52" fill="none" stroke="#f7bd3a" stroke-opacity="0.45" stroke-width="2.2"/><path d="M668.98 316.52 A14.3 14.3 0 0 1 659.79 332.44" fill="none" stroke="#f7bd3a" stroke-opacity="0.45" stroke-width="2.2"/><path d="M647.64 310.34 A11.3 11.3 0 0 1 662.16 310.34" fill="none" stroke="#f7bd3a" stroke-opacity="0.6" stroke-width="2.2"/><path d="M651.04 329.62 A11.3 11.3 0 0 1 643.77 317.04" fill="none" stroke="#f7bd3a" stroke-opacity="0.6" stroke-width="2.2"/><path d="M666.03 317.04 A11.3 11.3 0 0 1 658.76 329.62" fill="none" stroke="#f7bd3a" stroke-opacity="0.6" stroke-width="2.2"/><circle cx="654.9" cy="319" r="8.8" fill="#f9b104"/><text x="654.9" y="322.6" font-size="10" fill="#5a4a20" text-anchor="middle">21</text><defs><linearGradient id="pg" x1="0" y1="0" x2="0" y2="1"><stop offset="0" stop-color="#4ab4f0"/><stop offset="1" stop-color="#1670bb"/></linearGradient><filter id="blur"><feGaussianBlur stdDeviation="1.2"/></filter></defs><ellipse cx="464.5" cy="413" rx="8.5" ry="3.8" fill="#444" opacity="0.5" transform="rotate(-20 464.5 413)" filter="url(#blur)"/><path d="M452.6 424.3 C452 419 444.8 416 444.8 409 A8 8 0 0 1 460.8 409 C460.8 416 453.4 419 452.8 424.3Z" fill="url(#pg)" stroke="#fff" stroke-opacity="0.7" stroke-width="0.6"/><defs><filter id="sh" x="-50%" y="-50%" width="200%" height="200%"><feDropShadow dx="0" dy="0.5" stdDeviation="1.3" flood-color="#000" flood-opacity="0.6"/></filter><radialGradient id="ng" cx="50%" cy="40%" r="60%"><stop offset="0" stop-color="#fbfbfb"/><stop offset="1" stop-color="#e6e8ea"/></radialGradient></defs><circle cx="294.4" cy="114.9" r="17" fill="url(#ng)" stroke="#cfcfcf" stroke-width="0.6" filter="url(#sh)"/><circle cx="294.4" cy="114.9" r="5.2" fill="#eceeef" stroke="#e0e2e4" stroke-width="0.6"/><path d="M291 104.5 L294.4 101.5 L297.8 104.5 M291 125 L294.4 128.2 L297.8 125 M284.3 111.5 L281.3 114.9 L284.3 118.3 M304.5 111.5 L307.5 114.9 L304.5 118.3" fill="none" stroke="#5d6670" stroke-width="1.2"/><rect x="291" y="92.5" width="6.4" height="6.2" fill="#2a6cb5"/><text x="294.2" y="98" font-size="5.5" fill="#fff" text-anchor="middle">北</text><rect x="288" y="140.2" width="13" height="94.8" rx="2.5" fill="#fff" filter="url(#sh)"/><path d="M291.6 146.3 H297.4 M294.5 143.4 V149.2" stroke="#4a5058" stroke-width="1.3"/><path d="M291.6 228.4 H297.4" stroke="#4a5058" stroke-width="1.3"/><rect x="292.6" y="154" width="3.8" height="64.5" rx="1.9" fill="#c9d5e2"/><rect x="292.6" y="208" width="3.8" height="10.5" rx="1.9" fill="#2f8fe0"/><circle cx="294.5" cy="209.8" r="5.3" fill="#f8f9fa" stroke="#7a8fa8" stroke-width="0.9"/><rect x="728.2" y="92.2" width="54.6" height="16.7" fill="#fff" stroke="#8da0b8" stroke-width="0.8" filter="url(#sh)"/><rect x="728.6" y="92.6" width="27" height="15.9" fill="#2c8fe0"/><text x="741.8" y="104" font-size="9" font-weight="bold" fill="#fff" text-anchor="middle">地图</text><text x="768.7" y="104" font-size="9" fill="#333" text-anchor="middle">卫星</text></svg>
<div class="panel" style="left:800px;top:56px;width:250px;height:293px"></div>
<div class="ttl" style="left:814px;top:69px;">辖区报警用户</div>
<div class="th" style="left:804px;top:96px;width:246px;height:25px"></div>
<div class="t" style="left:843px;top:102.5px;">报...</div>
<div class="t c" style="left:893px;top:102.5px;">用...</div>
<div class="t c" style="left:950.5px;top:102.5px;">用气性质</div>
<div class="t c" style="left:1020px;top:102.5px;">安装位置</div>
<div class="clip" style="left:804px;top:121px;width:236px;height:177px">
<div class="t" style="left:11.5px;top:8.400000000000006px;">1</div>
<div class="t" style="left:39px;top:8.400000000000006px;">9</div>
<div class="t c" style="left:90.60000000000002px;top:8.400000000000006px;">山...</div>
<div class="t" style="left:123.29999999999995px;top:8.400000000000006px;">居民燃气...</div>
<div class="t" style="left:193px;top:8.400000000000006px;">江苏省无...</div>
<div class="t" style="left:11.5px;top:34.5px;">2</div>
<div class="t" style="left:39px;top:34.5px;">1</div>
<div class="t c" style="left:90.60000000000002px;top:34.5px;">二...</div>
<div class="t" style="left:123.29999999999995px;top:34.5px;">居民燃气...</div>
<div class="t" style="left:193px;top:34.5px;">梅地亚假...</div>
<div class="t" style="left:11.5px;top:60.60000000000002px;">3</div>
<div class="t" style="left:39px;top:60.60000000000002px;">1</div>
<div class="t c" style="left:90.60000000000002px;top:60.60000000000002px;">中...</div>
<div class="t" style="left:123.29999999999995px;top:60.60000000000002px;">工厂企业...</div>
<div class="t" style="left:193px;top:60.60000000000002px;">江苏省镇...</div>
<div class="t" style="left:11.5px;top:86.70000000000002px;">4</div>
<div class="t" style="left:39px;top:86.70000000000002px;">1</div>
<div class="t c" style="left:90.60000000000002px;top:86.70000000000002px;">7</div>
<div class="t" style="left:123.29999999999995px;top:86.70000000000002px;">居民燃气...</div>
<div class="t" style="left:193px;top:86.70000000000002px;">梅地亚假...</div>
<div class="t" style="left:11.5px;top:112.80000000000001px;">5</div>
<div class="t" style="left:39px;top:112.80000000000001px;">1</div>
<div class="t c" style="left:90.60000000000002px;top:112.80000000000001px;">山...</div>
<div class="t" style="left:123.29999999999995px;top:112.80000000000001px;">工厂企业...</div>
<div class="t" style="left:193px;top:112.80000000000001px;">江苏省无...</div>
<div class="t" style="left:11.5px;top:138.89999999999998px;">6</div>
<div class="t" style="left:39px;top:138.89999999999998px;">1</div>
<div class="t c" style="left:90.60000000000002px;top:138.89999999999998px;">...</div>
<div class="t" style="left:123.29999999999995px;top:138.89999999999998px;">居民燃气...</div>
<div class="t" style="left:193px;top:138.89999999999998px;">无锡市梅...</div>
<div class="t" style="left:11.5px;top:165.0px;">7</div>
<div class="t" style="left:39px;top:165.0px;">1</div>
<div class="t c" style="left:90.60000000000002px;top:165.0px;">3</div>
<div class="t" style="left:123.29999999999995px;top:165.0px;">居民燃气...</div>
<div class="t" style="left:193px;top:165.0px;">梅地亚假...</div>
<div class="t" style="left:11.5px;top:191.10000000000002px;">8</div>
<div class="t" style="left:39px;top:191.10000000000002px;">1</div>
<div class="t c" style="left:90.60000000000002px;top:191.10000000000002px;">山...</div>
<div class="t" style="left:123.29999999999995px;top:191.10000000000002px;">工厂企业...</div>
<div class="t" style="left:193px;top:191.10000000000002px;">江苏省无...</div>
</div>
<div style="position:absolute;left:1040px;top:121px;width:10px;height:177px;background:#f1f1f1"></div>
<div style="position:absolute;left:1040.7px;top:133px;width:9.3px;height:102px;background:#c1c1c1"></div>
<svg style="position:absolute;left:1040px;top:121px" width="10" height="177"><path d="M2.8 8.5 L5.3 6 L7.8 8.5Z" fill="#a3a3a3"/><path d="M2.8 168.2 L5.3 170.7 L7.8 168.2Z" fill="#505050"/></svg>
<div style="position:absolute;left:804px;top:298px;width:236px;height:10px;background:#f1f1f1"></div>
<div style="position:absolute;left:816px;top:298.7px;width:199px;height:9.3px;background:#c1c1c1"></div>
<svg style="position:absolute;left:804px;top:298px" width="236" height="10"><path d="M8.5 2.8 L6 5.3 L8.5 7.8Z" fill="#a3a3a3"/><path d="M227.2 2.8 L229.7 5.3 L227.2 7.8Z" fill="#505050"/></svg>
<div style="position:absolute;left:1040px;top:298px;width:10px;height:10px;background:#fff"></div>
<div style="position:absolute;left:809.3px;top:313.3px;width:52px;height:18px;border:1px solid #e6e6e6;border-radius:2px;background:#fff"></div>
<div class="t" style="left:814.9px;top:316.8px;color:#333;font-size:9px;letter-spacing:-0.4px">10 条/页</div>
<svg style="position:absolute;left:852.3px;top:320.3px" width="5" height="5"><path d="M0 0.5 L4 0.5 L2 4.2Z" fill="#000"/></svg>
<div class="t" style="left:867.8px;top:316.8px;font-size:9px;letter-spacing:-0.4px">共 14 条</div>
<svg style="position:absolute;left:911.8px;top:317.8px" width="7" height="10"><path d="M5.2 0.6 L1.2 4.7 L5.2 8.8" fill="none" stroke="#c6c6c6" stroke-width="1"/></svg>
<div style="position:absolute;left:927.8px;top:313.5px;width:21px;height:17.8px;border-radius:2px;background:#009688"></div>
<div class="t c" style="left:938.5px;top:316.6px;color:#fff;font-size:9.6px">1</div>
<div class="t c" style="left:959.0999999999999px;top:316.6px;color:#333;font-size:9.6px">2</div>
<svg style="position:absolute;left:980.3px;top:317.8px" width="7" height="10"><path d="M1.2 0.6 L5.2 4.7 L1.2 8.8" fill="none" stroke="#333" stroke-width="1"/></svg>
<div class="panel" style="left:8px;top:335px;width:250px;height:280px"></div>
<div class="ttl" style="left:22px;top:348.5px;">设备工作状态</div>
<svg style="position:absolute;left:0;top:0" width="270" height="603"><circle cx="135.3" cy="504.5" r="80.2" fill="#ff0000"/><path d="M135.3 504.5 L135.3 424.3 A80.2 80.2 0 0 1 192.01 447.79Z" fill="#23ab6c"/><polyline points="135.3,424.3 135.3,401 146.5,401" fill="none" stroke="#b7343c" stroke-width="0.8"/><polyline points="135.3,424.3 145,409.5 153.5,409.5" fill="none" stroke="#777" stroke-width="0.8"/><polyline points="135.3,424.3 174,417.5 184,417.5" fill="none" stroke="#f5b042" stroke-width="0.8"/><polyline points="135.3,424.3 182,425.6 196,425.8" fill="none" stroke="#4b9be8" stroke-width="0.8"/><path d="M135.3 424.3 Q160 430 170 431.8 L205 434.6" fill="none" stroke="#42b37a" stroke-width="0.8"/><path d="M106 581 L100 590.5 L81 590.5" fill="none" stroke="#ff0000" stroke-width="0.8"/></svg>
<div class="t" style="left:148.5px;top:396px;font-size:9.3px;line-height:11px;color:#b7343c">失效</div>
<div class="t" style="left:155.8px;top:405px;font-size:9.3px;line-height:11px;color:#777">关机</div>
<div class="t" style="left:185.5px;top:412.5px;font-size:9.3px;line-height:11px;color:#f5a623">故障</div>
<div class="t" style="left:198.5px;top:420.8px;font-size:9.3px;line-height:11px;color:#3e94e6">开机</div>
<div class="t" style="left:207.5px;top:429.5px;font-size:9.3px;line-height:11px;color:#3cae72">正常</div>
<div class="t" style="left:62.5px;top:585px;font-size:9.3px;line-height:11px;color:#ff0000">报警</div>
<div class="panel" style="left:800px;top:371px;width:250px;height:250px"></div>
<div class="ttl" style="left:814.5px;top:382.5px;">最新报警信息</div>
<div style="position:absolute;left:800px;top:402px;width:250px;height:201px;background:#f4f4f4"></div>
<div style="position:absolute;left:802.4px;top:404.8px;width:256px;font-size:11px;line-height:11.5px;color:#ff3b3b;white-space:normal;transform:scale(0.96);transform-origin:0 0"><div style="margin-bottom:3.75px;white-space:nowrap">13:06:53 <span style="color:#777">厨房燃气泄露</span> (山东省济南市市中区党杨路)</div><div style="margin-bottom:3.75px;white-space:nowrap">13:06:53 <span style="color:#777">厨房燃气泄露</span> (山东省济南市市中区党杨路)</div><div style="margin-bottom:3.75px;white-space:nowrap">13:06:53 <span style="color:#777">厨房燃气泄露</span> (山东省济南市市中区党杨路)</div><div style="margin-bottom:3.75px;white-space:nowrap">13:06:53 <span style="color:#777">厨房燃气泄露</span> (山东省济南市市中区党杨路)</div><div style="margin-bottom:3.75px;white-space:nowrap">13:06:53 <span style="color:#777">厨房燃气泄露</span> (山东省济南市市中区党杨路)</div><div style="margin-bottom:3.75px;white-space:nowrap">13:06:53 <span style="color:#777">厨房燃气泄露</span> (山东省济南市市中区党杨路)</div><div style="margin-bottom:3.75px;white-space:nowrap">13:06:53 <span style="color:#777">厨房燃气泄露</span> (山东省济南市市中区党杨路)</div><div style="margin-bottom:3.75px;white-space:nowrap">13:06:53 <span style="color:#777">厨房燃气泄露</span> (山东省济南市市中区党杨路)</div><div style="margin-bottom:3.75px;white-space:nowrap">13:06:53 <span style="color:#777">厨房燃气泄露</span> (山东省济南市市中区党杨路)</div><div style="margin-bottom:3.75px;white-space:nowrap">13:06:53 <span style="color:#777">厨房燃气泄露</span> (山东省济南市市中区党杨路)</div><div style="margin-bottom:3.75px;white-space:nowrap">13:06:53 <span style="color:#777">厨房燃气泄露</span> (山东省济南市市中区党杨路)</div><div>13:06:53 <span style="color:#777">马井一井防喷池H2S燃气泄露</span> (四川省德阳市什邡市)</div></div>
<svg style="position:absolute;left:871px;top:12px" width="23" height="22"><defs><linearGradient id="av" x1="0" y1="0" x2="0.3" y2="1"><stop offset="0" stop-color="#8c5a2c"/><stop offset="0.22" stop-color="#5a3414"/><stop offset="0.3" stop-color="#4a2810"/><stop offset="0.55" stop-color="#b08850"/><stop offset="0.8" stop-color="#d4b888"/><stop offset="1" stop-color="#a06a3a"/></linearGradient><clipPath id="avc"><circle cx="11.5" cy="10.6" r="10.3"/></clipPath></defs><g clip-path="url(#avc)"><rect width="23" height="22" fill="url(#av)"/><rect x="12" y="6" width="11" height="16" fill="#7a4a20" opacity="0.35"/><rect x="0" y="4.4" width="23" height="1.2" fill="#f4f0e8" opacity="0.85"/><rect x="10.7" y="0" width="1.3" height="22" fill="#f4f0e8" opacity="0.9"/></g></svg>
<div class="nav" style="left:902.5px;top:16.5px;letter-spacing:-0.12px">山东斯诺电子 [李助明(斯诺安装)]</div>
<svg style="position:absolute;left:1047px;top:19px" width="8" height="6"><path d="M0.3 0.5 L7.3 0.5 L3.8 4.8Z" fill="#d2ebe8"/></svg>
<div id="scroll"></div>
<div style="position:absolute;left:1059px;top:13px;width:9px;height:521px;background:#a8a8a8"></div>
<svg style="position:absolute;left:1057px;top:0" width="13" height="603"><path d="M3.5 8.5 L6.5 5.5 L9.5 8.5Z" fill="#a3a3a3"/><path d="M3.5 593.5 L6.5 596.5 L9.5 593.5Z" fill="#505050"/></svg>
<div style="position:absolute;left:0;top:602px;width:1057px;height:1px;background:#fcfcfc"></div></body></html>
